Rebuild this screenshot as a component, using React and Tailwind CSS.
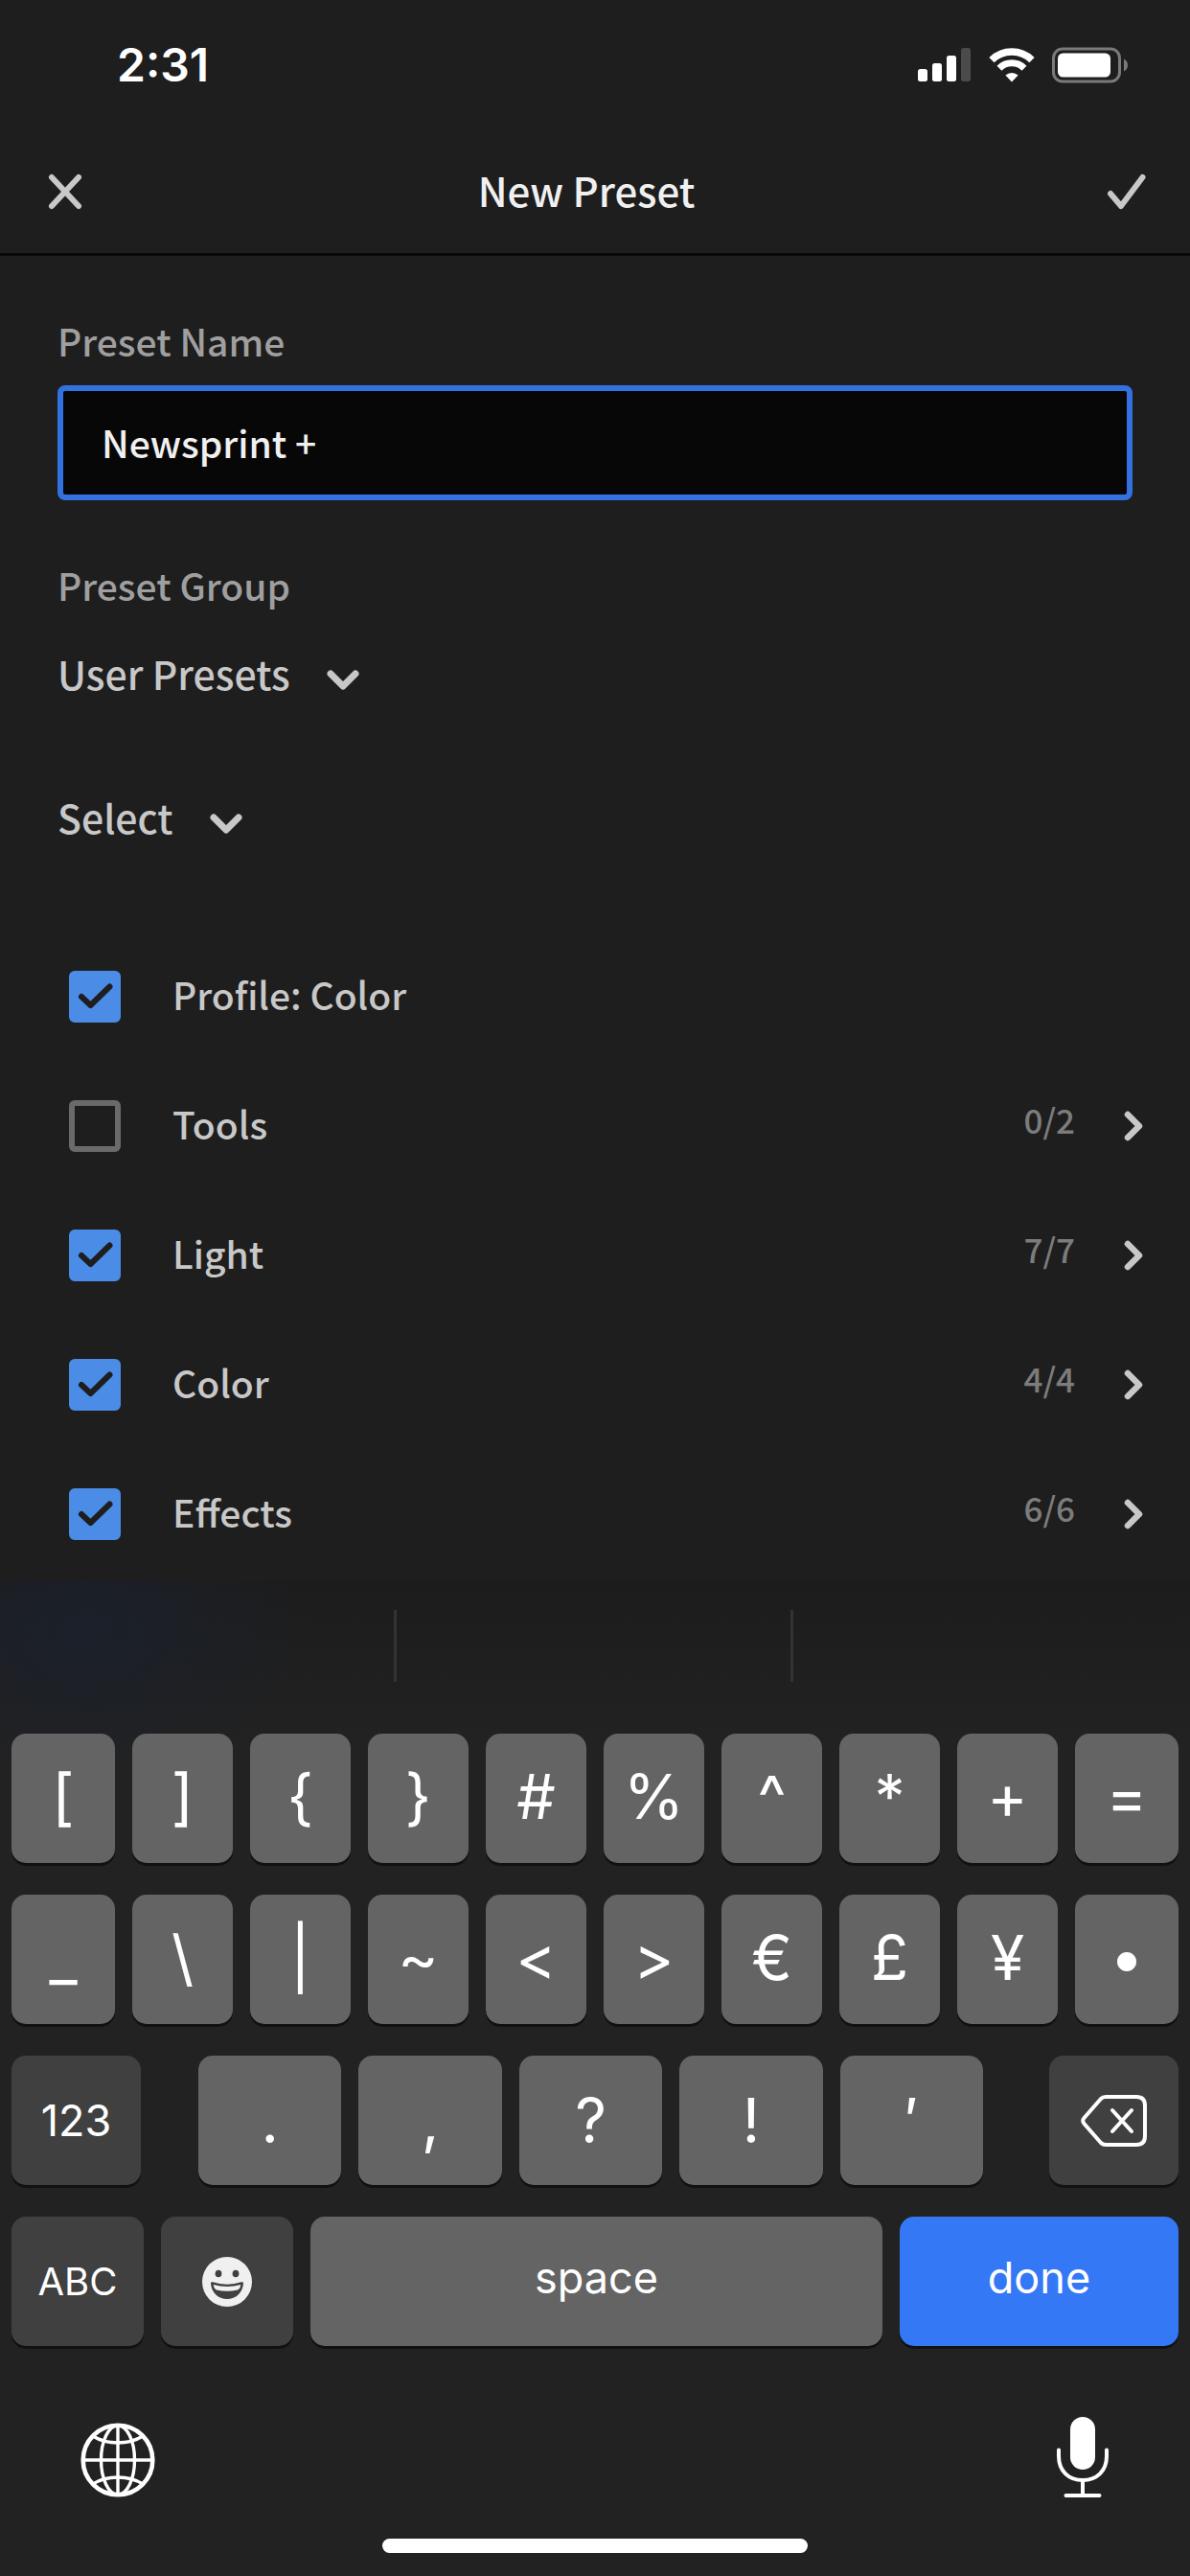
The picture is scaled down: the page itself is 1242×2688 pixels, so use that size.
import { useState } from "react";
import clsx from "clsx";

const PRESET_GROUPS = ["User Presets"];
const SELECT_OPTIONS = ["Select"];

const SETTINGS = [
  { id: "profile", label: "Profile: Color", checked: true },
  { id: "tools", label: "Tools", checked: false, count: "0/2" },
  { id: "light", label: "Light", checked: true, count: "7/7" },
  { id: "color", label: "Color", checked: true, count: "4/4" },
  { id: "effects", label: "Effects", checked: true, count: "6/6" },
];

const ROW_ONE = ["[", "]", "{", "}", "#", "%", "^", "*", "+", "="];
const ROW_TWO = ["_", "\\", "|", "~", "<", ">", "€", "£", "¥", "•"];
const ROW_THREE = [".", ",", "?", "!", "′"];

const App = () => {
  const [name, setName] = useState("Newsprint +");

  return (
    <div className="flex min-h-screen w-full flex-col bg-[#1e1e1e] font-['Noto_Sans_CJK_SC',sans-serif] font-medium text-[#c8c8c8]">
      <StatusBar />
      <Header />
      <main className="flex-1">
        <section className="flex flex-col items-start px-[60px] pt-16">
          <label htmlFor="preset-name" className="text-[39px] leading-[48px] text-[#9f9f9f]">
            Preset Name
          </label>
          <input
            id="preset-name"
            type="text"
            value={name}
            onChange={(e) => setName(e.target.value)}
            className="mt-[23px] h-[120px] w-full rounded-lg border-6 border-[#3471e0] bg-[#070707] px-10 pb-0.5 text-[39px] text-[#f0f0f0] outline-none"
          />
          <label htmlFor="preset-group" className="mt-16 text-[39px] leading-[48px] text-[#9f9f9f]">
            Preset Group
          </label>
          <Dropdown id="preset-group" label="Preset Group" options={PRESET_GROUPS} className="mt-11" />
          <Dropdown id="select-settings" label="Select settings" options={SELECT_OPTIONS} className="mt-[102px]" />
        </section>
        <ul className="mt-24 pr-12 pl-[72px]">
          {SETTINGS.map((s) => (
            <SettingRow key={s.id} setting={s} />
          ))}
        </ul>
      </main>
      <Keyboard />
    </div>
  );
};

export default App;

const StatusBar = () => (
  <div className="flex h-[136px] items-center justify-between pr-16 pl-[122px] font-['Inter',sans-serif] text-white">
    <span className="text-5xl font-semibold">2:31</span>
    <div className="flex items-center gap-[18px]">
      <svg className="h-9 w-14" viewBox="0 0 56 36" fill="currentColor">
        <rect x="0" y="22" width="10" height="13" rx="2.5" />
        <rect x="15" y="16" width="10" height="19" rx="2.5" />
        <rect x="30" y="8" width="10" height="27" rx="2.5" />
        <rect x="45" y="0" width="10" height="35" rx="2.5" opacity="0.2" />
      </svg>
      <svg className="h-9 w-12" viewBox="0 0 48 36" fill="none" stroke="currentColor">
        <path d="M3 12.6 A30 30 0 0 1 45 12.6" strokeWidth="7.5" />
        <path d="M11 21.2 A18.4 18.4 0 0 1 37 21.2" strokeWidth="7" />
        <path d="M24 35.5 L17.4 28.6 A9.5 9.5 0 0 1 30.6 28.6 Z" fill="currentColor" stroke="none" />
      </svg>
      <svg className="h-[38px] w-20" viewBox="0 0 80 38">
        <rect x="1.5" y="2" width="69" height="34" rx="9.5" fill="none" stroke="#7a7a7a" strokeWidth="3" />
        <rect x="6" y="6.5" width="55" height="25" rx="5.5" fill="#fff" />
        <path d="M75 12.5 Q79 14.5 79 19 Q79 23.5 75 25.5 Z" fill="#7a7a7a" />
      </svg>
    </div>
  </div>
);

const Header = () => (
  <header className="flex h-[131px] items-center justify-between border-b-3 border-[#090909] pr-10 pl-[45px]">
    <button type="button" aria-label="Close">
      <svg className="size-[46px]" viewBox="0 0 46 46" fill="none" stroke="#c8c8c8" strokeWidth="6" strokeLinecap="round">
        <path d="M9 8 L37 38 M37 8 L9 38" />
      </svg>
    </button>
    <h1 className="pb-1 text-[42px] leading-[48px] text-[#f0f0f0]">New Preset</h1>
    <button type="button" aria-label="Save preset" className="flex w-[69px] justify-end">
      <svg className="size-[46px]" viewBox="0 0 46 46" fill="none" stroke="#c8c8c8" strokeWidth="6" strokeLinecap="round" strokeLinejoin="round">
        <path d="M3 25 L14 38 L36.5 8" />
      </svg>
    </button>
  </header>
);

const Dropdown = ({ id, label, options, className }) => (
  <div className={clsx("flex items-center gap-[38px]", className)}>
    <select id={id} aria-label={label} className="h-12 appearance-none bg-transparent text-[41px] leading-[48px] outline-none">
      {options.map((o) => (
        <option key={o}>{o}</option>
      ))}
    </select>
    <svg className="mt-4 h-[22px] w-[34px]" viewBox="0 0 34 22" fill="none" stroke="currentColor" strokeWidth="7" strokeLinecap="round" strokeLinejoin="round">
      <path d="M4 4 L17 17 L30 4" />
    </svg>
  </div>
);

const SettingRow = ({ setting }) => {
  const [checked, setChecked] = useState(setting.checked);

  return (
    <li className="flex h-[135px] items-center">
      <span className="grid size-[54px] place-items-center">
        <input
          id={setting.id}
          type="checkbox"
          checked={checked}
          onChange={() => setChecked(!checked)}
          className="size-[54px] appearance-none rounded-md border-6 border-[#6a6a6a] [grid-area:1/1] checked:border-[#4a8ce6] checked:bg-[#4a8ce6]"
        />
        {checked && (
          <svg className="pointer-events-none size-[54px] [grid-area:1/1]" viewBox="0 0 54 54" fill="none" stroke="#1e1e1e" strokeWidth="6" strokeLinecap="round" strokeLinejoin="round">
            <path d="M13 27 L22.5 36 L42.5 16.5" />
          </svg>
        )}
      </span>
      <label htmlFor={setting.id} className="flex-1 pb-1.5 pl-[54px] text-[39px] leading-[48px]">
        {setting.label}
      </label>
      {setting.count && (
        <button type="button" aria-label={`${setting.label} ${setting.count}`} className="flex items-center gap-[50px]">
          <span className="pb-3.5 text-[35px] leading-10 text-[#7c7c7c]">{setting.count}</span>
          <svg className="h-8 w-[22px]" viewBox="0 0 22 32" fill="none" stroke="currentColor" strokeWidth="6.5" strokeLinecap="round" strokeLinejoin="round">
            <path d="M5 4 L17 16 L5 28" />
          </svg>
        </button>
      )}
    </li>
  );
};

const Key = ({ children, dark, className, ...props }) => (
  <button
    type="button"
    className={clsx(
      "flex h-[135px] items-center justify-center rounded-[15px] shadow-[0_3px_0_#111111]",
      dark ? "bg-[#404040]" : !className?.includes("bg-") && "bg-[#646464]",
      className
    )}
    {...props}
  >
    {children}
  </button>
);

const Keyboard = () => (
  <div className="bg-[#222222] bg-[radial-gradient(ellipse_240px_160px_at_90px_50px,#1b202a,transparent),linear-gradient(#1c1c1c,#222222_170px)] font-['Inter',sans-serif] font-normal text-white">
    {/* Suggestions */}
    <div className="grid h-[159px] grid-cols-3 pt-[30px]">
      <div className="h-[75px] border-r-3 border-[#333333]" />
      <div className="h-[75px] border-r-3 border-[#333333]" />
    </div>

    <div className="flex flex-col gap-[33px] px-3 text-[64px] leading-none">
      <KeyRow keys={ROW_ONE} />
      <KeyRow keys={ROW_TWO} />
      <div className="flex">
        <Key dark className="w-[135px] text-[45px]">
          123
        </Key>
        <div className="mr-[69px] ml-[60px] grid flex-1 grid-cols-5 gap-[18px]">
          {ROW_THREE.map((k) => (
            <Key key={k}>{k}</Key>
          ))}
        </div>
        <Key dark className="w-[135px]" aria-label="Delete">
          <svg className="h-14 w-[70px]" viewBox="0 0 70 56" fill="none" stroke="currentColor" strokeWidth="4" strokeLinecap="round" strokeLinejoin="round">
            <path d="M26 3 H58 Q67 3 67 12 V44 Q67 53 58 53 H26 Q23 53 21 51 L3.5 31 Q1 28 3.5 25 L21 5 Q23 3 26 3 Z" />
            <path d="M33 17 L53 39 M53 17 L33 39" />
          </svg>
        </Key>
      </div>
      <div className="flex gap-[18px] text-[45px]">
        <Key dark className="w-[138px] text-[40px]">
          ABC
        </Key>
        <Key dark className="w-[138px]" aria-label="Emoji">
          <EmojiIcon />
        </Key>
        <Key className="flex-1 pb-2">space</Key>
        <Key className="w-[291px] bg-[#3478f6] pb-2">done</Key>
      </div>
    </div>

    <div className="flex items-start justify-between px-[84px] pt-[73px]">
      <button type="button" aria-label="Next keyboard" className="mt-[7px]">
        <GlobeIcon />
      </button>
      <button type="button" aria-label="Dictate">
        <MicIcon />
      </button>
    </div>
    <div className="mx-auto mt-[43px] mb-6 h-[15px] w-[444px] rounded-full bg-white" />
  </div>
);

const KeyRow = ({ keys }) => (
  <div className="grid grid-cols-[108fr_repeat(8,105fr)_108fr] gap-[18px]">
    {keys.map((k) => (
      <Key key={k} className="pb-1">
        {k}
      </Key>
    ))}
  </div>
);

const EmojiIcon = () => (
  <svg className="size-[54px]" viewBox="0 0 54 54">
    <circle cx="27" cy="27" r="26" fill="#f0f0f0" />
    <ellipse cx="18" cy="18.5" rx="3.4" ry="3.8" fill="#404040" />
    <ellipse cx="36" cy="18.5" rx="3.4" ry="3.8" fill="#404040" />
    <path d="M10 28.5 Q10 26.8 12 27.3 Q27 32 42 27.3 Q44 26.8 44 28.5 C43.5 38.5 36 45 27 45 C18 45 10.5 38.5 10 28.5 Z" fill="#404040" />
    <path d="M12.8 30 Q27 34 41.2 30 Q41 34 38 35.5 Q27 38 16 35.5 Q13 34 12.8 30 Z" fill="#f0f0f0" />
  </svg>
);

const GlobeIcon = () => (
  <svg className="size-[78px]" viewBox="0 0 78 78" fill="none" stroke="currentColor" strokeWidth="3.4">
    <circle cx="39" cy="39" r="36.3" strokeWidth="4.6" />
    <ellipse cx="39" cy="39" rx="17.5" ry="36" />
    <path d="M39 2 V76 M2 39 H76" />
    <path d="M13 14 Q24 21 39 21 Q54 21 65 14 M13 64 Q24 57 39 57 Q54 57 65 64" />
  </svg>
);

const MicIcon = () => (
  <svg className="h-[85px] w-14" viewBox="0 0 56 85" fill="none" stroke="currentColor" strokeWidth="4" strokeLinecap="round">
    <rect x="15" y="1" width="26" height="55" rx="13" fill="currentColor" stroke="none" />
    <path d="M3 35.5 V42 C3 57.500 13.5 67 28 67 C42.5 67 53 57.500 53 42 V35.5" />
    <path d="M28 67 V83 M10.5 83 H45.5" />
  </svg>
);
